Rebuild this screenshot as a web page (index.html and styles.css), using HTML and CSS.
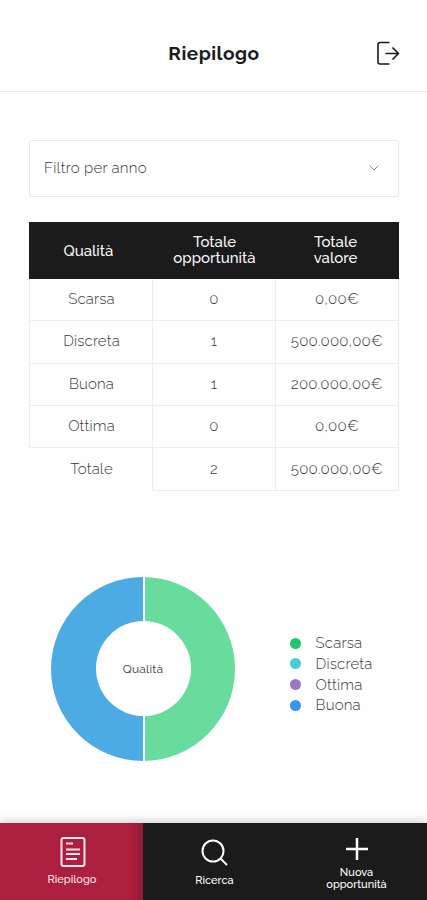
FILE: index.html
```html
<!DOCTYPE html>
<html lang="it">
<head>
<meta charset="utf-8">
<meta name="viewport" content="width=device-width, initial-scale=1">
<title>Riepilogo</title>
<link rel="stylesheet" href="styles.css">
</head>
<body>
<header class="header">
  <h1>Riepilogo</h1>
  <svg class="logout" width="26" height="26" viewBox="0 0 26 26"><path class="door" d="M15.500 2.500H6Q4 2.500 4 4.500V22Q4 24 6 24H15.500"/><path d="M11.500 13.500H24M18.500 7.500L24.500 13.500L18.500 19.500"/></svg>
</header>
<main>
  <div class="filter"><span>Filtro per anno</span><svg width="12" height="8" viewBox="0 0 12 8"><path d="M1.500 1.500L6 6L10.500 1.500"/></svg></div>
  <table>
    <thead><tr><th>Qualità</th><th>Totale<br>opportunità</th><th class="value">Totale<br>valore</th></tr></thead>
    <tbody>
      <tr><td>Scarsa</td><td class="num">0</td><td class="num">0,00€</td></tr>
      <tr><td>Discreta</td><td class="num">1</td><td class="num">500.000,00€</td></tr>
      <tr><td>Buona</td><td class="num">1</td><td class="num">200.000,00€</td></tr>
      <tr><td>Ottima</td><td class="num">0</td><td class="num">0,00€</td></tr>
      <tr class="total"><td>Totale</td><td class="num">2</td><td class="num">500.000,00€</td></tr>
    </tbody>
  </table>
  <section class="chart">
    <div class="donut"><span>Qualità</span></div>
    <ul class="legend">
      <li class="scarsa">Scarsa</li><li class="discreta">Discreta</li><li class="ottima">Ottima</li><li class="buona">Buona</li>
    </ul>
  </section>
</main>
<nav>
  <a class="active"><svg width="26" height="32" viewBox="0 0 26 32"><rect x="1.500" y="2" width="23" height="28" rx="2"/><path d="M6 7.500H13M6 13.500H20M6 18H20M6 23H17"/></svg><span>Riepilogo</span></a>
  <a class="search"><svg width="30" height="30" viewBox="0 0 30 30"><circle cx="13" cy="13" r="10.500"/><path d="M20 20L27 27"/></svg><span>Ricerca</span></a>
  <a class="add"><svg width="24" height="24" viewBox="0 0 24 24"><path d="M12 1V23M1 12H23"/></svg><span>Nuova<br>opportunità</span></a>
</nav>
</body>
</html>
```
FILE: styles.css
```css
* { box-sizing: border-box; }
body { margin: 0; width: 427px; height: 900px; overflow: hidden; display: flex; flex-direction: column; background: #fefefe; color: #39393b; font-family: Raleway, Lato, "Open Sans", sans-serif; font-weight: 400; }
svg { fill: none; stroke: currentColor; flex: none; }
.header { height: 92px; border-bottom: 1.500px solid #e8e8e8; display: grid; grid-template-columns: 1fr auto 1fr; align-items: center; padding: 15px 27px 0; color: #1b1b1b; }
h1 { grid-column: 2; margin: 0; padding-left: 1px; font-size: 19px; line-height: 24px; font-weight: 700; letter-spacing: .5px; }
.logout { justify-self: end; stroke-width: 1.700; stroke-linejoin: round; }
.door { stroke-width: 1.600; }
main { flex: 1; padding: 48px 28px 0 29px; }
.filter { height: 57px; border: 1.500px solid #e8e8e8; border-radius: 3px; display: flex; justify-content: space-between; align-items: center; padding: 0 18px 2px 14px; font-size: 15px; font-weight: 350; letter-spacing: .25px; }
.filter svg { color: #888; }
table { width: 370px; margin-top: 25px; table-layout: fixed; border-collapse: separate; border-spacing: 0; text-align: center; font-size: 15px; letter-spacing: .15px; }
th { height: 56.800px; padding: 0; background: #1b1b1b; color: #f7f7f7; line-height: 16px; font-weight: 500; letter-spacing: 0; }
th:first-child { width: 124px; padding: 1px 5px 0 0; }
.value { padding: 0 4px 0 0; }
td { height: 42.400px; padding: 0 0 1px; font-weight: 350; border-right: 1px solid #ededed; border-bottom: 1px solid #ededed; }
td:first-child { padding-left: 1px; border-left: 1px solid #ededed; }
.total td:first-child { border-left-color: transparent; border-bottom-color: transparent; }
.num { font-variant-numeric: oldstyle-nums; }
.chart { margin: 86px 0 0 22px; display: flex; align-items: center; }
.donut { width: 184px; height: 184px; border-radius: 50%; display: grid; place-items: center; background: linear-gradient(90deg, #4dabe3 92px, #fff 92px 94px, #68dc9d 94px); font-size: 12px; letter-spacing: .2px; }
.donut span { width: 95px; height: 95px; border-radius: 50%; background: #fefefe; display: grid; place-items: center; }
.legend { list-style: none; margin: 11px 0 0 55px; padding: 0; font-size: 15px; font-weight: 350; letter-spacing: .2px; }
.legend li { height: 20.700px; display: flex; align-items: center; gap: 14.500px; }
.legend li::before { content: ""; width: 11px; height: 11px; border-radius: 50%; background: var(--dot); }
.scarsa { --dot: #20c770; }
.discreta { --dot: #48cdd3; }
.ottima { --dot: #9b78c3; }
.buona { --dot: #3395f4; }
nav { height: 77px; display: grid; grid-template-columns: 143px 143px 141px; background: #1b1b1b; color: #fff; box-shadow: 0 -2px 9px rgba(0,0,0,.18); }
nav a { display: flex; flex-direction: column; align-items: center; font-size: 11px; line-height: 12px; font-weight: 500; text-align: center; }
nav svg { stroke-width: 2; }
.active { padding: 13px 0 0 2px; gap: 6px; background: linear-gradient(90deg, #ad1f3e 91%, #921b36); color: #ffe5ec; }
.active span { margin-left: -1px; }
.search { padding-top: 15px; gap: 7px; }
.add { padding-top: 14px; gap: 6px; }
.add svg { stroke-width: 2.500; }
```
